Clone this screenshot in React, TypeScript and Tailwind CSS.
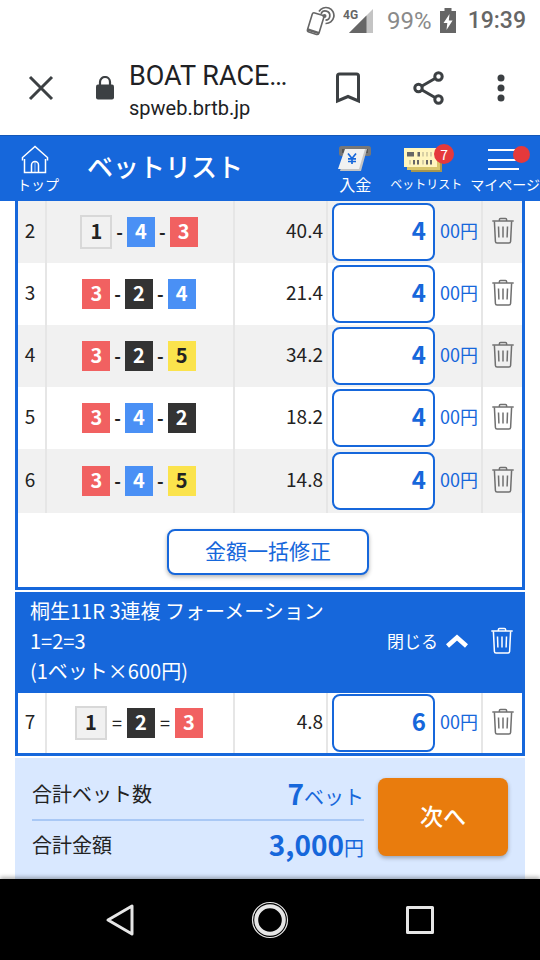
import React from "react";

type Bet = { no: number; boats: number[]; sep: "-" | "="; odds: string; amount: string };

const firstBets: Bet[] = [
  { no: 2, boats: [1, 4, 3], sep: "-", odds: "40.4", amount: "4" },
  { no: 3, boats: [3, 2, 4], sep: "-", odds: "21.4", amount: "4" },
  { no: 4, boats: [3, 2, 5], sep: "-", odds: "34.2", amount: "4" },
  { no: 5, boats: [3, 4, 2], sep: "-", odds: "18.2", amount: "4" },
  { no: 6, boats: [3, 4, 5], sep: "-", odds: "14.8", amount: "4" },
];

const secondBets: Bet[] = [
  { no: 7, boats: [1, 2, 3], sep: "=", odds: "4.8", amount: "6" },
];

const boatStyle: Record<number, string> = {
  1: "w-8 h-[34px] border-2 border-[#d8d8d8] bg-[#f1f1f1] text-[#222]",
  2: "w-7 h-[30px] bg-[#333333] text-white",
  3: "w-7 h-[30px] bg-[#f16161] text-white",
  4: "w-7 h-[30px] bg-[#4a90f5] text-white",
  5: "w-7 h-[30px] bg-[#fbe34c] text-[#222]",
};

const separatorStyle: Record<Bet["sep"], string> = {
  "-": "mx-1 text-lg leading-7 font-bold",
  "=": "mx-[5px] text-lg leading-7",
};

function TrashIcon() {
  return (
    <svg width="22" height="28" viewBox="0 0 22 28" fill="none" stroke="currentColor" strokeWidth="1.500">
      <path d="M0.300 4H21.700" />
      <path d="M7.400 4V2.600Q7.400 1.500 8.500 1.500H13.500Q14.600 1.500 14.600 2.600V4" />
      <path d="M2.400 4.400L3.400 24.500Q3.500 26 5 26H17Q18.500 26 18.600 24.500L19.600 4.400" />
      <path d="M6.500 9.500L6.900 20.500M11 9.500V20.500M15.500 9.500L15.100 20.500" />
    </svg>
  );
}

function Boats({ boats, sep }: { boats: number[]; sep: Bet["sep"] }) {
  return (
    <div className="flex items-center justify-center">
      {boats.map((b, i) => (
        <React.Fragment key={i}>
          {i > 0 && <span className={"pb-0.5 " + separatorStyle[sep]}>{sep}</span>}
          <span className={"flex items-center justify-center pb-0.5 text-xl leading-6 font-bold " + boatStyle[b]}>{b}</span>
        </React.Fragment>
      ))}
    </div>
  );
}

function BetTable({ bets, label, rowClass }: { bets: Bet[]; label: string; rowClass: string }) {
  return (
    <table aria-label={label} className="w-full table-fixed border-collapse text-[19px] leading-6">
      <colgroup>
        <col className="w-7" />
        <col />
        <col className="w-[93px]" />
        <col className="w-[155px]" />
        <col className="w-10" />
      </colgroup>
      <tbody>
        {bets.map((bet) => (
          <tr key={bet.no} className={rowClass}>
            <td className="border-r-2 border-[#e6e6e6] p-0 pr-[3px] pb-1 text-center">{bet.no}</td>
            <td className="border-r-2 border-[#e6e6e6] p-0 pr-0.5">
              <Boats boats={bet.boats} sep={bet.sep} />
            </td>
            <td className="border-r-2 border-[#e6e6e6] p-0 pr-[3px] pb-1 text-right">{bet.odds}</td>
            <td className="border-r-2 border-[#e6e6e6] p-0 pr-[3px] pl-1">
              <label className="flex items-center gap-[5px] text-[#1667db]">
                <input
                  type="text"
                  inputMode="numeric"
                  aria-label={`ベット${bet.no} 金額`}
                  defaultValue={bet.amount}
                  className="h-[58px] w-0 min-w-0 flex-1 rounded-lg border-2 border-[#1667db] bg-white px-[7px] pb-1.5 text-right text-2xl font-bold"
                />
                <span className="pb-1 text-lg leading-6">00円</span>
              </label>
            </td>
            <td className="p-0 pb-0.5">
              <button type="button" aria-label="削除" className="flex w-full justify-center text-[#707070]">
                <TrashIcon />
              </button>
            </td>
          </tr>
        ))}
      </tbody>
    </table>
  );
}

function StatusBar() {
  return (
    <div className="flex h-[42px] items-center justify-end pr-3.5 font-[Roboto,sans-serif] text-2xl text-[#666]">
      <svg width="30" height="30" viewBox="0 0 30 30" fill="none" stroke="#666" className="mr-2">
        <g transform="rotate(17 10 18)">
          <rect x="4.500" y="7.500" width="12" height="20" rx="2" strokeWidth="1.600" />
          <path d="M4.500 25.500H16.500" strokeWidth="2.500" />
        </g>
        <g strokeWidth="1.700">
          <path d="M14 5.500A8 8 0 1 1 20.500 17.500" />
          <path d="M16 7.800A4.600 4.600 0 1 1 20.500 14.200" />
        </g>
        <circle cx="19.500" cy="10" r="2" fill="#666" stroke="none" />
      </svg>
      <svg width="30" height="28" viewBox="0 0 30 28" className="mr-3.5">
        <text x="0" y="12" fontFamily="Roboto" fontSize="12" fontWeight="700" fill="#666">4G</text>
        <path d="M30 2V26H6z" fill="#c4c4c4" />
        <path d="M23.500 8.500V26H6z" fill="#666" />
      </svg>
      <span className="mr-2 text-[#8a8a8a]">99%</span>
      <svg width="16" height="26" viewBox="0 0 16 26" className="mr-3">
        <path d="M4.500 0H11.500V3H16V25H0V3H4.500z" fill="#666" />
        <path d="M9.500 6L3.500 15H7.300L6.500 22L12.600 12.500H8.800z" fill="#fff" />
      </svg>
      <span className="text-[23px] font-medium">19:39</span>
    </div>
  );
}

function BrowserBar() {
  return (
    <div className="flex h-[93px] items-center pr-7 pb-0.5 pl-7 font-[Roboto,sans-serif] text-[#202124]">
      <button type="button" aria-label="閉じる">
        <svg width="26" height="26" viewBox="0 0 26 26" stroke="#3c4043" strokeWidth="3" fill="none">
          <path d="M2 2L24 24M24 2L2 24" />
        </svg>
      </button>
      <svg width="20" height="24" viewBox="0 0 20 24" className="mr-3.5 ml-[41px]">
        <path d="M5 10V6A5 5 0 0 1 15 6V10" fill="none" stroke="#3c4043" strokeWidth="2.200" />
        <rect x="1" y="8.500" width="18" height="15" rx="2" fill="#3c4043" />
      </svg>
      <div className="min-w-0 flex-1 pt-2">
        <div className="truncate text-[27px] leading-8">BOAT RACE…</div>
        <div className="truncate text-xl leading-8">spweb.brtb.jp</div>
      </div>
      <div className="flex items-center">
        <button type="button" aria-label="ブックマーク" className="mr-[52px]">
          <svg width="26" height="32" viewBox="0 0 26 32" fill="none" stroke="#3c4043" strokeWidth="3">
            <path d="M2.500 29V4Q2.500 2 4.500 2H21.500Q23.500 2 23.500 4V29L13 24.500z" />
          </svg>
        </button>
        <button type="button" aria-label="共有" className="mr-[53px]">
          <svg width="31" height="34" viewBox="0 0 31 34" fill="none" stroke="#3c4043" strokeWidth="3">
            <path d="M9 15L22 7.500M9 19L22 26.500" />
            <circle cx="5.500" cy="17" r="3.700" />
            <circle cx="25.500" cy="5.500" r="3.700" />
            <circle cx="25.500" cy="28.500" r="3.700" />
          </svg>
        </button>
        <button type="button" aria-label="メニュー" className="mr-[7px]">
          <svg width="8" height="28" viewBox="0 0 8 28" fill="#3c4043">
            <circle cx="4" cy="4" r="3.500" />
            <circle cx="4" cy="14" r="3.500" />
            <circle cx="4" cy="24" r="3.500" />
          </svg>
        </button>
      </div>
    </div>
  );
}

function SiteHeader() {
  return (
    <header className="flex h-[66px] items-start border-t border-[#1458b8] bg-[#1667db] pt-2 pl-[17px] text-white">
      <a href="#top" className="flex w-[42px] flex-col items-start">
        <svg width="36" height="30" viewBox="-4 0 36 30" fill="none" stroke="#fff" strokeWidth="1.500">
          <path d="M1.500 16.500V13.500L14 2.500L26.500 13.500V16.500" />
          <path d="M3.500 15V28.500H24.500V15" />
          <path d="M10.500 28.500V21A3.500 3.500 0 0 1 17.500 21V28.500" />
          <path d="M14 17.500V28" strokeWidth="0.600" />
        </svg>
        <span className="text-sm leading-5">トップ</span>
      </a>
      <h1 className="ml-7 flex-1 text-[26px] leading-[44px] font-medium whitespace-nowrap">ベットリスト</h1>
      <nav className="flex">
        <a href="#deposit" className="mr-[18px] flex flex-col items-center">
          <svg width="34" height="30" viewBox="0 0 34 30">
            <rect x="1" y="2" width="32" height="10" rx="2.500" fill="#777" />
            <rect x="4" y="5" width="26" height="4" fill="#555" />
            <path d="M9 5H29L23 27H2z" fill="#c4c4c4" />
            <path d="M7 5H27L21 25H0z" fill="#f1f1f1" />
            <path d="M10 9.500L14 14.500L18 9.500M14 14.500V20M10 14.800H18M10 17.500H18" fill="none" stroke="#1667db" strokeWidth="1.700" />
          </svg>
          <span className="text-base leading-5">入金</span>
        </a>
        <a href="#bets" className="relative mr-2 flex flex-col items-center">
          <svg width="48" height="30" viewBox="0 0 48 30">
            <path d="M9 9H40V28H9z" fill="#a8964d" />
            <path d="M5 7H38V26H5z" fill="#d8c66c" />
            <path d="M2 4H35V23H2z" fill="#fff5bd" />
            <path d="M5 8H12V12.500H5zM15.500 8H18V12.500H15.500zM11 16H13V20.500H11zM15 16H17V20.500H15zM24 16H26V20.500H24zM28 16H30V20.500H28z" fill="#666" />
            <path d="M20 8H22V12.500H20zM24 8H26V12.500H24zM28 8H30V12.500H28zM7 16H9V20.500H7zM20 16H22V20.500H20z" fill="#d7cfa4" />
          </svg>
          <span className="text-xs leading-5">ベットリスト</span>
          <span className="absolute top-0 left-11 flex h-5 w-5 items-center justify-center rounded-full bg-[#e5393b] text-sm leading-5">7</span>
        </a>
        <a href="#mypage" className="relative flex flex-col items-center">
          <svg width="36" height="30" viewBox="0 0 36 30" stroke="#fff" strokeWidth="2.200">
            <path d="M1 6H32M1 16H32M1 25H32" />
          </svg>
          <span className="text-sm leading-5">マイページ</span>
          <span className="absolute top-0.5 left-[43px] h-[17px] w-[17px] rounded-full bg-[#e5393b]" />
        </a>
      </nav>
    </header>
  );
}

export default function App() {
  return (
    <div className="flex min-h-screen w-full flex-col bg-white font-['Noto_Sans_CJK_JP',sans-serif] text-[#222]">
      <StatusBar />
      <BrowserBar />
      <SiteHeader />
      <main className="px-[15px]">
        <section className="border-x-[3px] border-b-[3px] border-[#1667db]">
          <BetTable bets={firstBets} label="ベットリスト" rowClass="h-[62px] last:h-16 odd:bg-[#f1f1f1]" />
          <div className="flex justify-center pt-4 pr-1 pb-3">
            <button
              type="button"
              className="h-[46px] w-[202px] rounded-lg border-2 border-[#1667db] bg-white pb-0.5 text-[21px] text-[#1667db] shadow-[0_2px_4px_rgba(0,0,0,0.3)]"
            >
              金額一括修正
            </button>
          </div>
        </section>
        <section className="mt-0.5 border-x-[3px] border-b-[3px] border-[#1667db]">
          <div className="flex items-center bg-[#1667db] pt-1 pb-[7px] pl-3 text-white">
            <h2 className="flex-1 text-xl leading-[30px]">
              桐生11R 3連複 フォーメーション
              <br />
              1=2=3
              <br />
              (1ベット×600円)
            </h2>
            <button type="button" className="mr-3.5 flex items-center gap-2 text-[17px] leading-[30px] whitespace-nowrap">
              閉じる
              <svg width="22" height="14" viewBox="0 0 22 14" fill="none" stroke="#fff" strokeWidth="4.500">
                <path d="M1.500 12L11 3.500L20.500 12" />
              </svg>
            </button>
            <button type="button" aria-label="削除" className="flex w-10 justify-center">
              <TrashIcon />
            </button>
          </div>
          <BetTable bets={secondBets} label="3連複" rowClass="h-[60px]" />
        </section>
        <section className="mt-0.5 flex items-start bg-[#d9e8ff] pt-5 pr-[17px] pb-[15px] pl-[17px]">
          <dl className="min-w-0 flex-1 text-xl">
            <div className="flex h-[43px] items-center justify-between border-b-2 border-[#a9c8f5] pb-[9px]">
              <dt>合計ベット数</dt>
              <dd className="text-[#1667db]">
                <span className="text-[28px] leading-8 font-bold">7</span>ベット
              </dd>
            </div>
            <div className="flex h-[43px] items-center justify-between pt-1">
              <dt>合計金額</dt>
              <dd className="text-[#1667db]">
                <span className="text-[28px] leading-8 font-bold">3,000</span>円
              </dd>
            </div>
          </dl>
          <button
            type="button"
            className="ml-3.5 h-[78px] w-[130px] rounded-lg bg-[#e97c0d] pb-1 text-[23px] font-medium text-white shadow-[0_2px_4px_rgba(0,0,0,0.3)]"
          >
            次へ
          </button>
        </section>
      </main>
      <nav className="relative flex flex-1 items-center justify-around bg-black px-[45px] py-5 shadow-[0_-2px_4px_rgba(0,0,0,0.3)]">
        <button type="button" aria-label="戻る">
          <svg width="40" height="40" viewBox="0 0 40 40" fill="none" stroke="#e6e6e6" strokeWidth="3" strokeLinejoin="round">
            <path d="M32 6V34L8 20z" />
          </svg>
        </button>
        <button type="button" aria-label="ホーム">
          <svg width="40" height="40" viewBox="0 0 40 40" fill="none" stroke="#e6e6e6">
            <circle cx="20" cy="20" r="17.500" strokeWidth="1.200" />
            <circle cx="20" cy="20" r="13.800" strokeWidth="4" />
          </svg>
        </button>
        <button type="button" aria-label="履歴">
          <svg width="40" height="40" viewBox="0 0 40 40" fill="none" stroke="#e6e6e6" strokeWidth="3" strokeLinejoin="round">
            <rect x="7.500" y="7.500" width="25" height="25" />
          </svg>
        </button>
      </nav>
    </div>
  );
}
